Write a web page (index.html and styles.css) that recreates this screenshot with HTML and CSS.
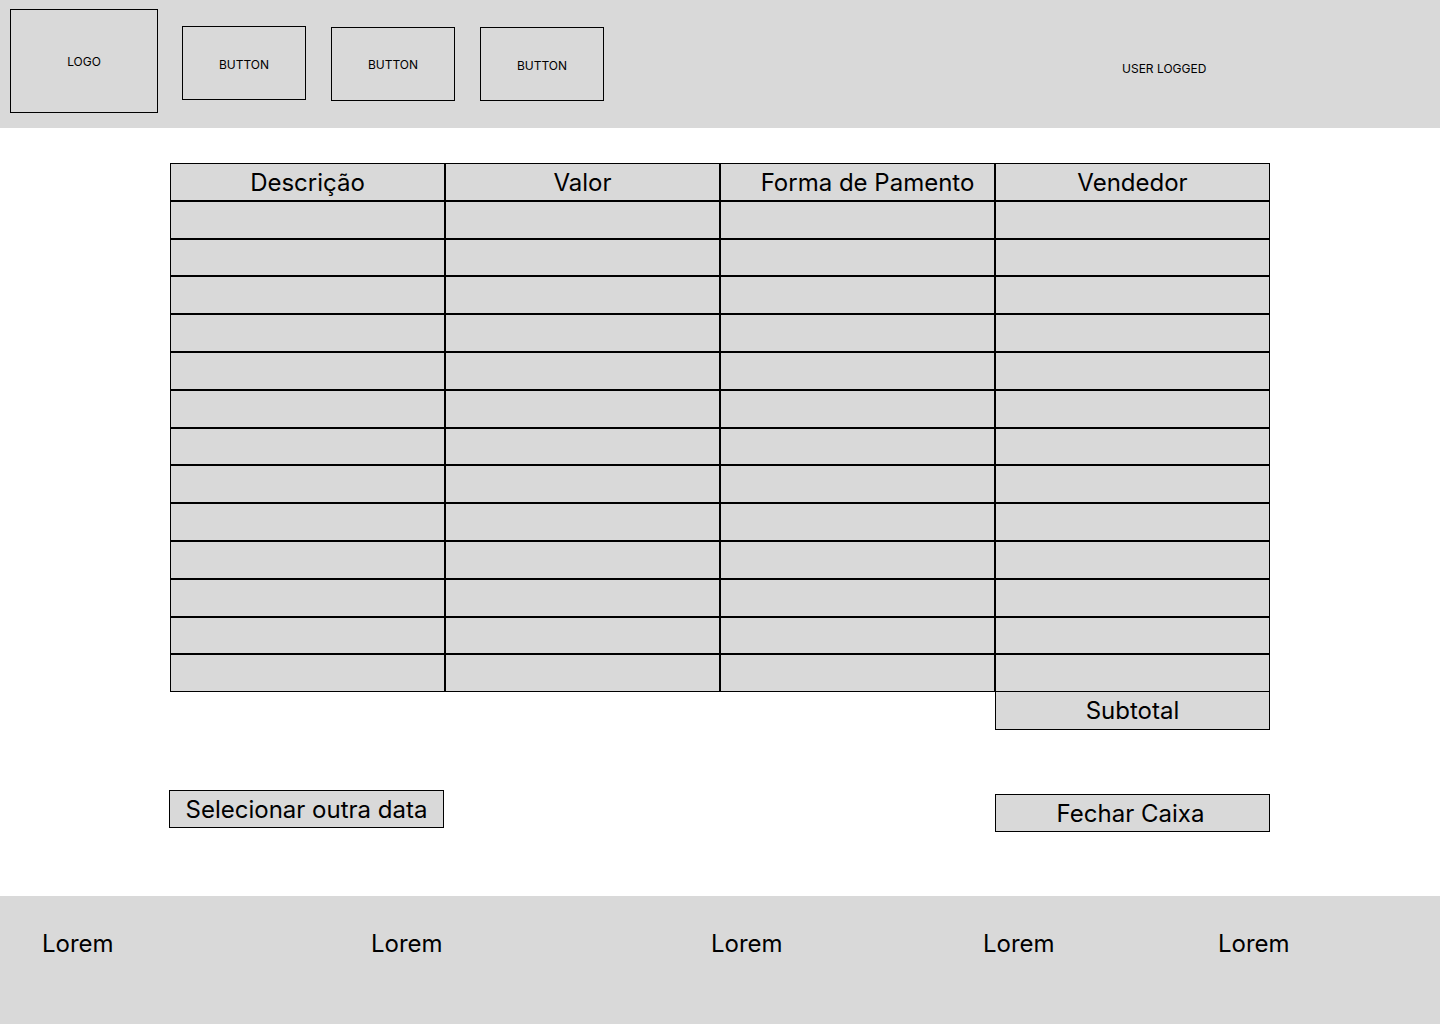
FILE: index.html
```html
<!DOCTYPE html>
<html lang="pt">
  <head>
    <meta charset="UTF-8" />
    <meta name="viewport" content="width=device-width, initial-scale=1.0" />
    <title>Fechamento de Caixa</title>
    <link rel="stylesheet" href="styles.css">
  </head>
  <body>
    <header class="topbar">
      <div class="logo">LOGO</div>
      <nav class="nav">
        <button class="nav-btn">BUTTON</button>
        <button class="nav-btn low up">BUTTON</button>
        <button class="nav-btn low">BUTTON</button>
      </nav>
      <div class="user">USER LOGGED</div>
    </header>

    <main class="content">
      <div class="table">
        <div class="cell head">Descrição</div>
        <div class="cell head">Valor</div>
        <div class="cell head shift">Forma de Pamento</div>
        <div class="cell head">Vendedor</div>

        <div class="cell"></div><div class="cell"></div><div class="cell"></div><div class="cell"></div>
        <div class="cell"></div><div class="cell"></div><div class="cell"></div><div class="cell"></div>
        <div class="cell"></div><div class="cell"></div><div class="cell"></div><div class="cell"></div>
        <div class="cell"></div><div class="cell"></div><div class="cell"></div><div class="cell"></div>
        <div class="cell"></div><div class="cell"></div><div class="cell"></div><div class="cell"></div>
        <div class="cell"></div><div class="cell"></div><div class="cell"></div><div class="cell"></div>
        <div class="cell"></div><div class="cell"></div><div class="cell"></div><div class="cell"></div>
        <div class="cell"></div><div class="cell"></div><div class="cell"></div><div class="cell"></div>
        <div class="cell"></div><div class="cell"></div><div class="cell"></div><div class="cell"></div>
        <div class="cell"></div><div class="cell"></div><div class="cell"></div><div class="cell"></div>
        <div class="cell"></div><div class="cell"></div><div class="cell"></div><div class="cell"></div>
        <div class="cell"></div><div class="cell"></div><div class="cell"></div><div class="cell"></div>
        <div class="cell"></div><div class="cell"></div><div class="cell"></div><div class="cell"></div>
      </div>
      <div class="subtotal">Subtotal</div>

      <div class="actions">
        <button class="action">Selecionar outra data</button>
        <button class="action close">Fechar Caixa</button>
      </div>
    </main>

    <footer class="footer">
      <span>Lorem</span>
      <span>Lorem</span>
      <span>Lorem</span>
      <span>Lorem</span>
      <span>Lorem</span>
    </footer>
  </body>
</html>
```

FILE: styles.css
```css
* {
  box-sizing: border-box;
}
body {
  margin: 0;
  background-color: white;
  color: black;
  font-family: Inter, "Liberation Sans", sans-serif;
}
.topbar {
  height: 128px;
  background-color: #d9d9d9;
  display: flex;
  align-items: flex-start;
  padding: 9px 0 0 10px;
}
.logo {
  width: 148px;
  height: 104px;
  border: 1px solid black;
  display: flex;
  align-items: center;
  justify-content: center;
  font-size: 12px;
}
.nav {
  display: flex;
  gap: 25px;
  margin-left: 24px;
  padding-top: 17px;
}
.nav-btn {
  width: 124px;
  height: 74px;
  border: 1px solid black;
  background: transparent;
  font-family: inherit;
  font-size: 12px;
  color: black;
  padding: 2px 0 0;
}
.nav-btn.low {
  margin-top: 1px;
}
.nav-btn.up {
  padding: 0;
}
.user {
  margin-left: 518px;
  padding-top: 52px;
  font-size: 12px;
}
.content {
  width: 1100px;
  margin: 0 auto;
  padding: 35px 0 64px;
}
.table {
  display: grid;
  grid-template-columns: repeat(4, 275px);
  grid-auto-rows: 37.8px;
}
.cell {
  border: 1px solid black;
  background-color: #d9d9d9;
}
.head {
  display: flex;
  align-items: center;
  justify-content: center;
  padding-top: 2px;
  font-size: 24px;
}
.head.shift {
  padding-left: 20px;
}
.subtotal {
  width: 275px;
  height: 38px;
  margin-left: auto;
  border: 1px solid black;
  border-top: 0;
  background-color: #d9d9d9;
  display: flex;
  align-items: center;
  justify-content: center;
  font-size: 24px;
}
.actions {
  display: flex;
  justify-content: space-between;
  align-items: flex-start;
  margin-top: 60px;
  height: 42px;
}
.action {
  width: 275px;
  height: 38px;
  border: 1px solid black;
  background-color: #d9d9d9;
  font-family: inherit;
  font-size: 24px;
  color: black;
  padding: 0;
  margin-left: -1px;
}
.action.close {
  margin-top: 4px;
  margin-left: 0;
  padding-right: 4px;
}
.footer {
  height: 128px;
  background-color: #d9d9d9;
  display: grid;
  grid-template-columns: 329px 340px 272px 235px auto;
  align-items: start;
  padding: 33px 0 0 42px;
  font-size: 24px;
}
```
